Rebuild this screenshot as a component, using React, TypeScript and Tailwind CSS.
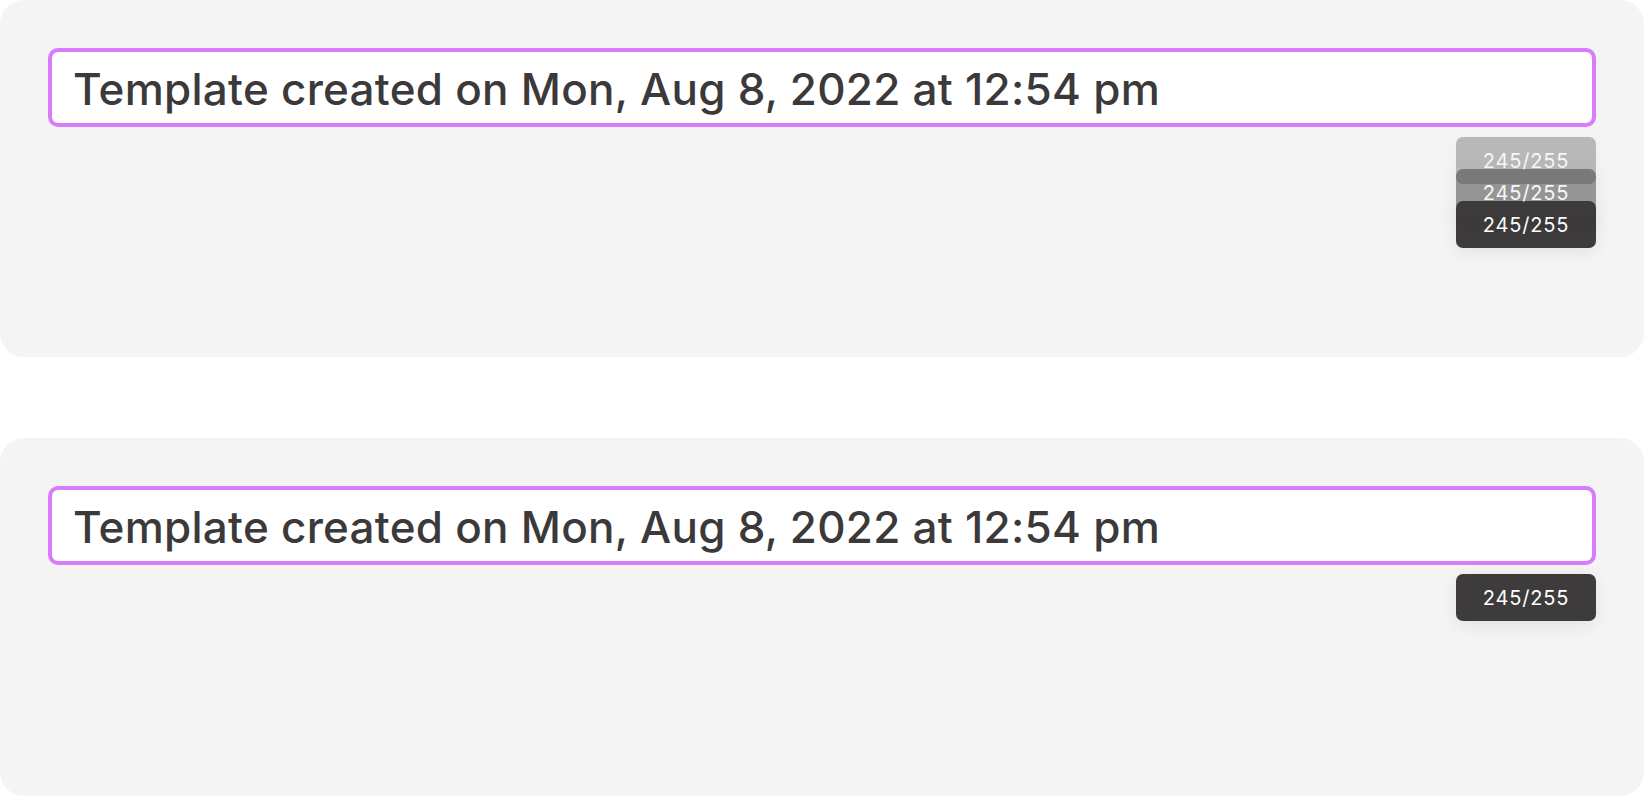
import React from "react";

const title = "Template created on Mon, Aug 8, 2022 at 12:54 pm";

const Counter: React.FC<{ className?: string }> = ({ className = "" }) => (
  <div
    className={`flex h-[47px] w-[140px] items-center justify-center rounded-[7px] bg-[#3d3b3b] text-[20px] tracking-[0.04em] text-white shadow-[0_4px_18px_rgba(0,0,0,0.08)] ${className}`}
    style={{ fontFamily: "Inter, 'Liberation Sans', sans-serif" }}
  >
    245/255
  </div>
);

const TitleField: React.FC = () => (
  <div className="flex h-[79px] items-center rounded-[10px] border-4 border-[#d77cfb] bg-white pl-[21px]">
    <span
      className="pt-[2px] text-[44px] font-medium leading-none tracking-[0.006em] text-[#3b3939]"
      style={{ fontFamily: "Inter, 'Noto Sans', sans-serif" }}
    >
      {title}
    </span>
  </div>
);

export default function App() {
  return (
    <div className="flex min-h-screen flex-col gap-[81px] bg-white">
      <section className="h-[357px] rounded-[24px] bg-[#f4f4f4] p-12">
        <TitleField />
        <div className="mt-[10px] flex flex-col items-end">
          <Counter className="opacity-[0.32]" />
          <Counter className="-mt-[15px] opacity-50" />
          <Counter className="-mt-[15px]" />
        </div>
      </section>

      <section className="h-[358px] rounded-[24px] bg-[#f4f4f4] p-12">
        <TitleField />
        <div className="mt-[9px] flex justify-end">
          <Counter />
        </div>
      </section>
    </div>
  );
}
